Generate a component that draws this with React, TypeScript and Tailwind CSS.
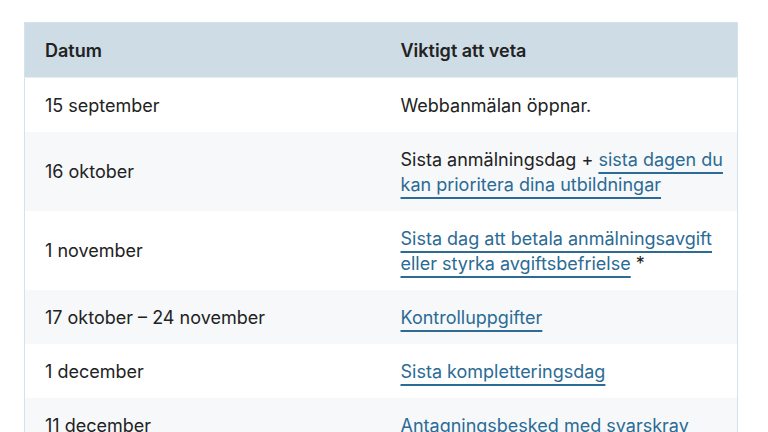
const rows: { date: string; info: React.ReactNode }[] = [
  { date: '15 september', info: 'Webbanmälan öppnar.' },
  {
    date: '16 oktober',
    info: (
      <>
        Sista anmälningsdag + <Link>sista dagen du kan prioritera dina utbildningar</Link>
      </>
    ),
  },
  {
    date: '1 november',
    info: (
      <>
        <Link>Sista dag att betala anmälningsavgift eller styrka avgiftsbefrielse</Link> *
      </>
    ),
  },
  { date: '17 oktober – 24 november', info: <Link>Kontrolluppgifter</Link> },
  { date: '1 december', info: <Link>Sista kompletteringsdag</Link> },
  { date: '11 december', info: <Link>Antagningsbesked med svarskrav</Link> },
];

function Link({ children }: { children: React.ReactNode }) {
  return (
    <a
      href="#"
      className="text-[#2b6b95] underline decoration-[#2b6b95] decoration-2 underline-offset-[6px]"
    >
      {children}
    </a>
  );
}

export default function App() {
  return (
    <div className="min-h-screen bg-white pt-[22px] px-[24px] font-['Inter',sans-serif] text-[18px] text-[#222]">
      <table className="w-[714px] border-collapse border border-[#d5e2eb] table-fixed">
        <thead>
          <tr className="bg-[#cddce5] border-b border-[#e4edf2]">
            <th className="w-[356px] pl-[20px] pr-4 py-[14.5px] leading-[25px] text-left font-semibold">Datum</th>
            <th className="pl-[20px] pr-3 py-[14.5px] leading-[25px] text-left font-semibold">Viktigt att veta</th>
          </tr>
        </thead>
        <tbody>
          {rows.map((row, i) => (
            <tr key={row.date} className={i % 2 === 1 ? 'bg-[#f6f8fa]' : 'bg-white'}>
              <td className="pl-[20px] pr-4 py-[14.5px] leading-[25px] align-middle">{row.date}</td>
              <td className="pl-[20px] pr-3 py-[14.5px] leading-[25px] align-middle">{row.info}</td>
            </tr>
          ))}
        </tbody>
      </table>
    </div>
  );
}
